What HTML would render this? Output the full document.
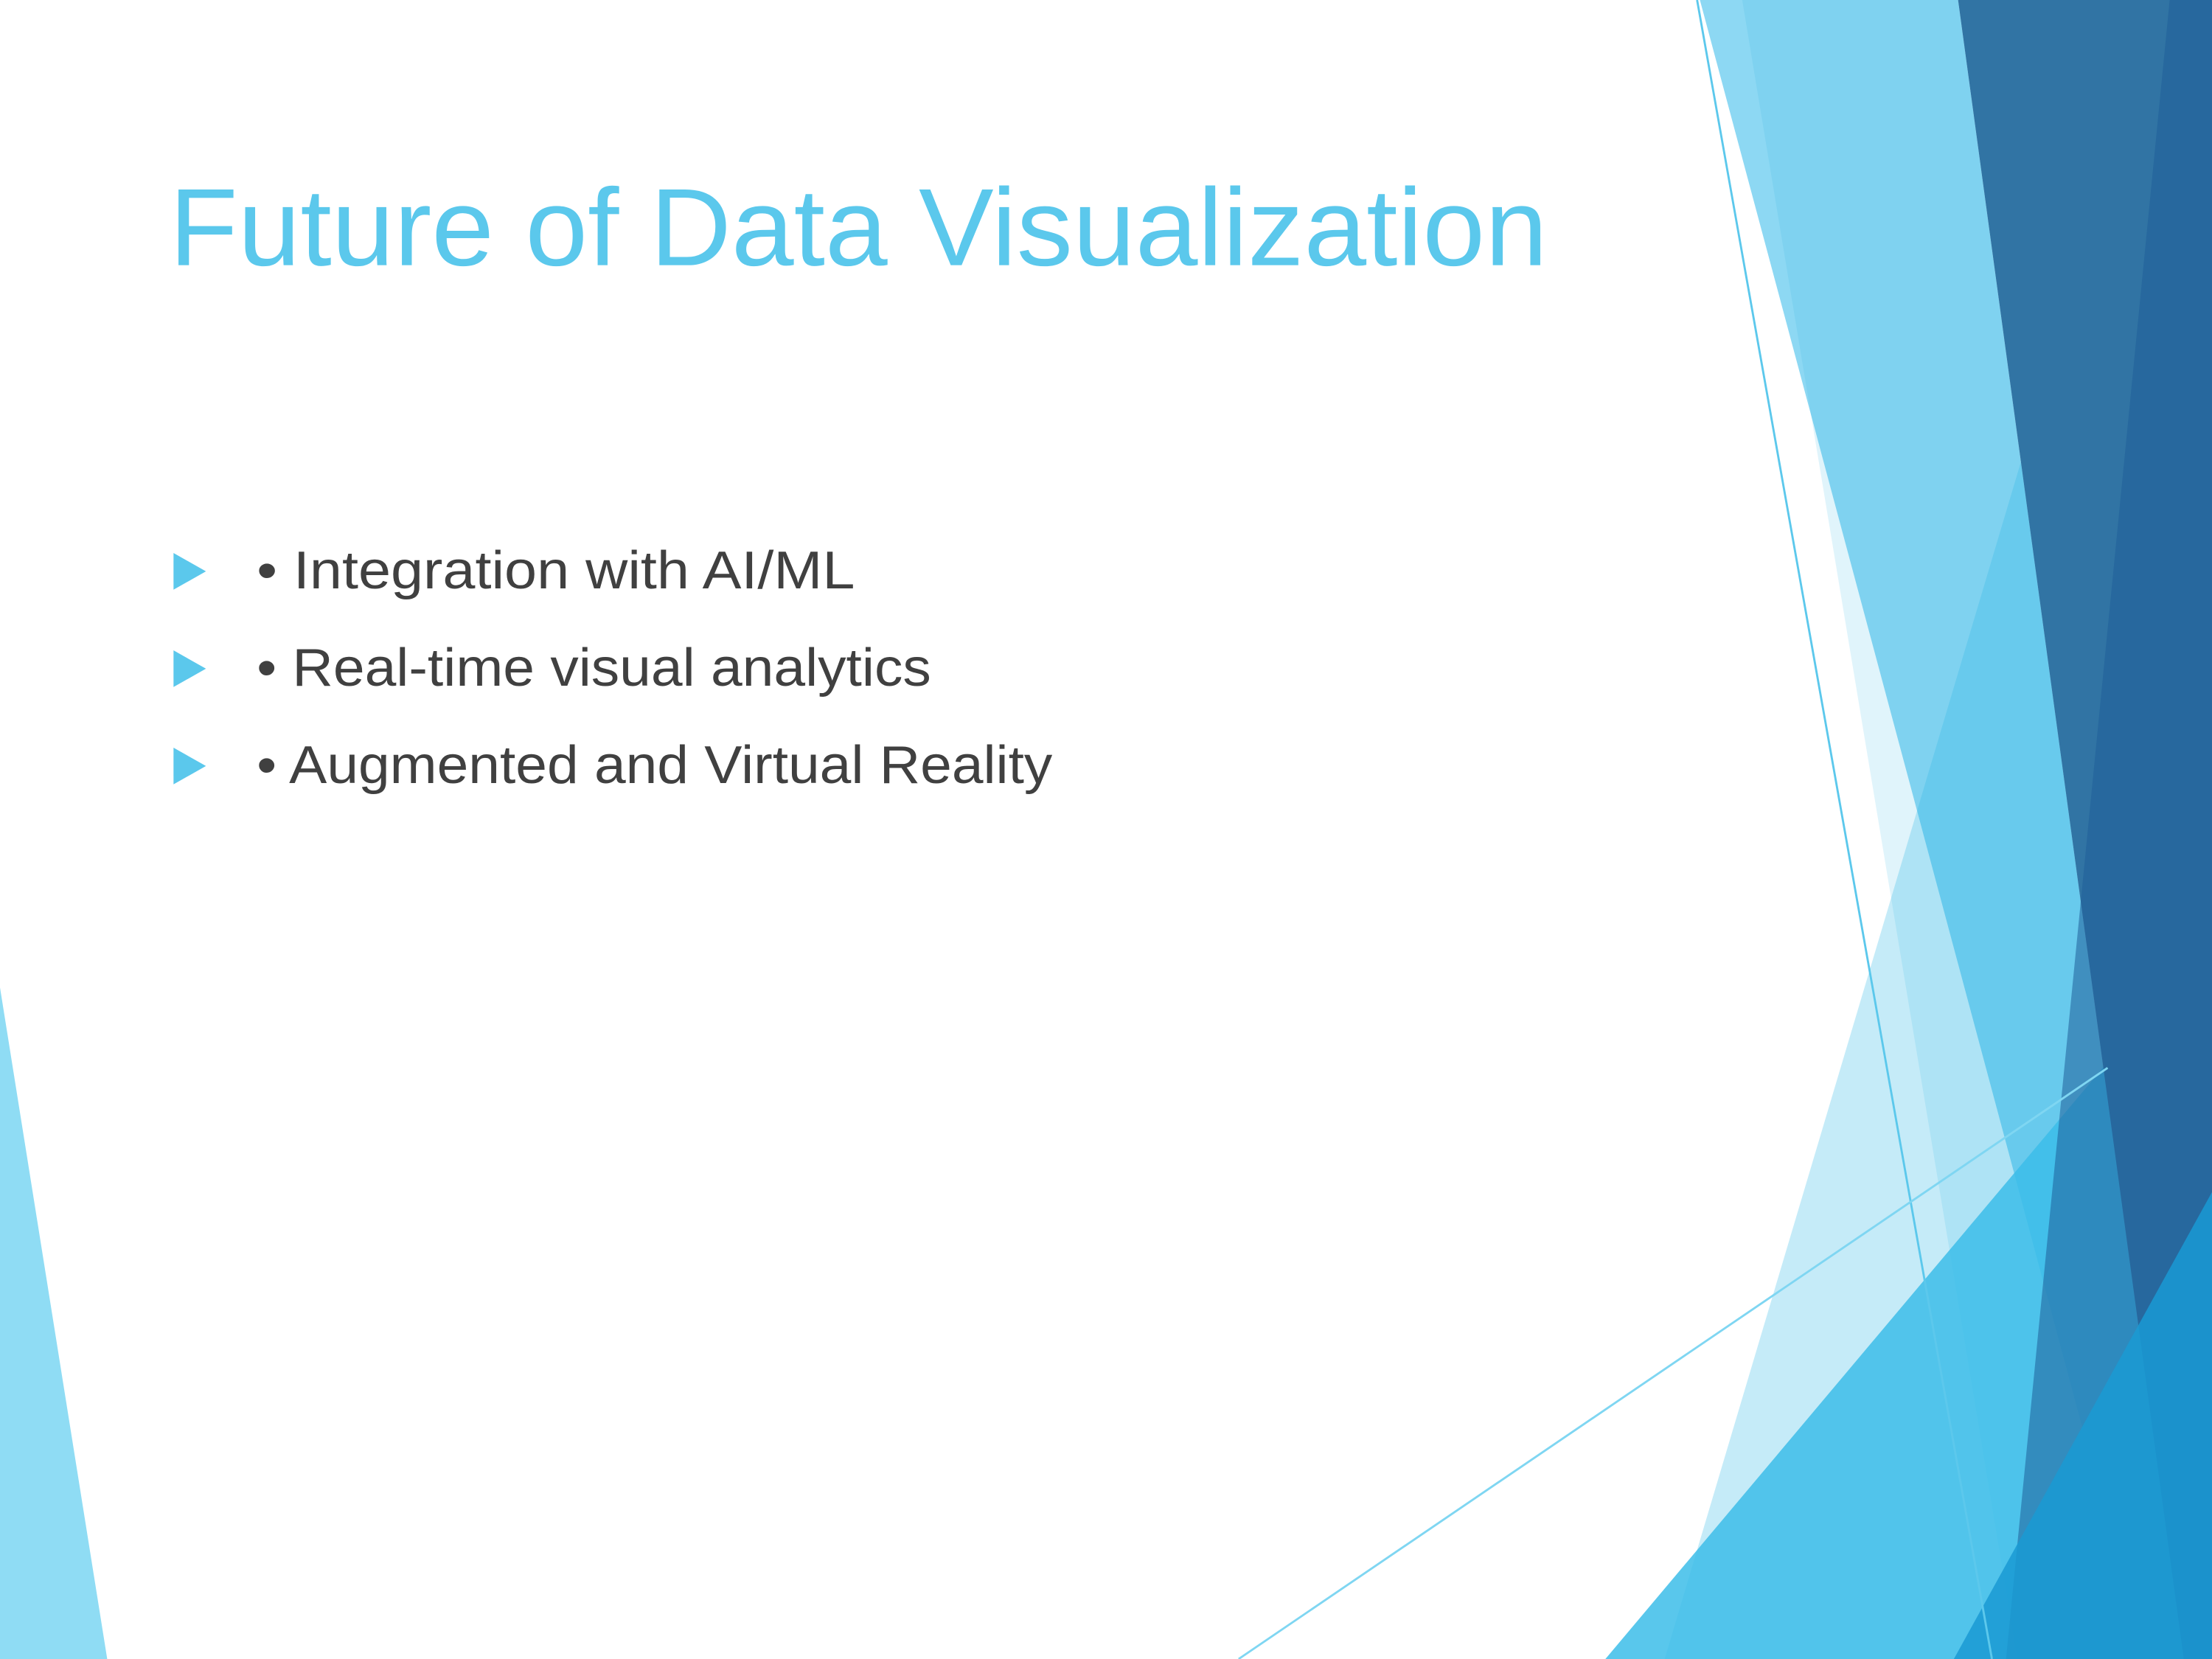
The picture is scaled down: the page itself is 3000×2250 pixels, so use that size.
<!DOCTYPE html>
<html><head><style>html,body{margin:0;padding:0;background:#fff}svg{display:block}</style></head>
<body>
<svg width="3000" height="2250" viewBox="0 0 1568 1176" preserveAspectRatio="none" xmlns="http://www.w3.org/2000/svg">
<rect width="1568" height="1176" fill="#fff"/>
<polygon points="0,700 0,1176 76,1176" fill="#8fdcf4"/>
<!-- band B -->
<polygon points="1205,0 1388,0 1548,1176 1520,1176" fill="#8dd8f3"/>
<!-- band A -->
<polygon points="1235,0 1388,0 1548,1176 1430,1176" fill="rgb(48,182,230)" opacity="0.15"/>
<!-- pale half-plane -->
<polygon points="1180,1176 1530,0 1568,0 1568,1176" fill="rgb(48,182,230)" opacity="0.28"/>
<!-- bottom triangle -->
<polygon points="1138,1176 1568,665 1568,1176" fill="#3cbde9" opacity="0.85"/>
<!-- dark -->
<polygon points="1388,0 1568,0 1568,1176 1548,1176" fill="#3174a4"/>
<polygon points="1538,0 1568,0 1568,1176 1422,1176" fill="#1f5f99" opacity="0.55"/>
<polygon points="1568,845 1568,1176 1385,1176" fill="#1a9ad3" opacity="0.85"/>
<!-- thin lines -->
<line x1="1203" y1="0" x2="1412" y2="1176" stroke="#5cc8ec" stroke-width="1.5"/>
<line x1="878" y1="1176" x2="1494" y2="757" stroke="#7fd6f2" stroke-width="1.5"/>
<text x="120" y="188" font-family="Liberation Sans, sans-serif" font-size="78" fill="#5bc8ec" textLength="977" lengthAdjust="spacingAndGlyphs">Future of Data Visualization</text>
<g fill="#5bc8ec">
<polygon points="123,392 146,405 123,418"/>
<polygon points="123,461 146,474 123,487"/>
<polygon points="123,530 146,543 123,556"/>
</g>
<g font-family="Liberation Sans, sans-serif" font-size="38" fill="#404040">
<text x="182" y="417" textLength="424" lengthAdjust="spacingAndGlyphs">• Integration with AI/ML</text>
<text x="182" y="486" textLength="478" lengthAdjust="spacingAndGlyphs">• Real-time visual analytics</text>
<text x="182" y="555" textLength="564" lengthAdjust="spacingAndGlyphs">• Augmented and Virtual Reality</text>
</g>
</svg>
</body></html>
